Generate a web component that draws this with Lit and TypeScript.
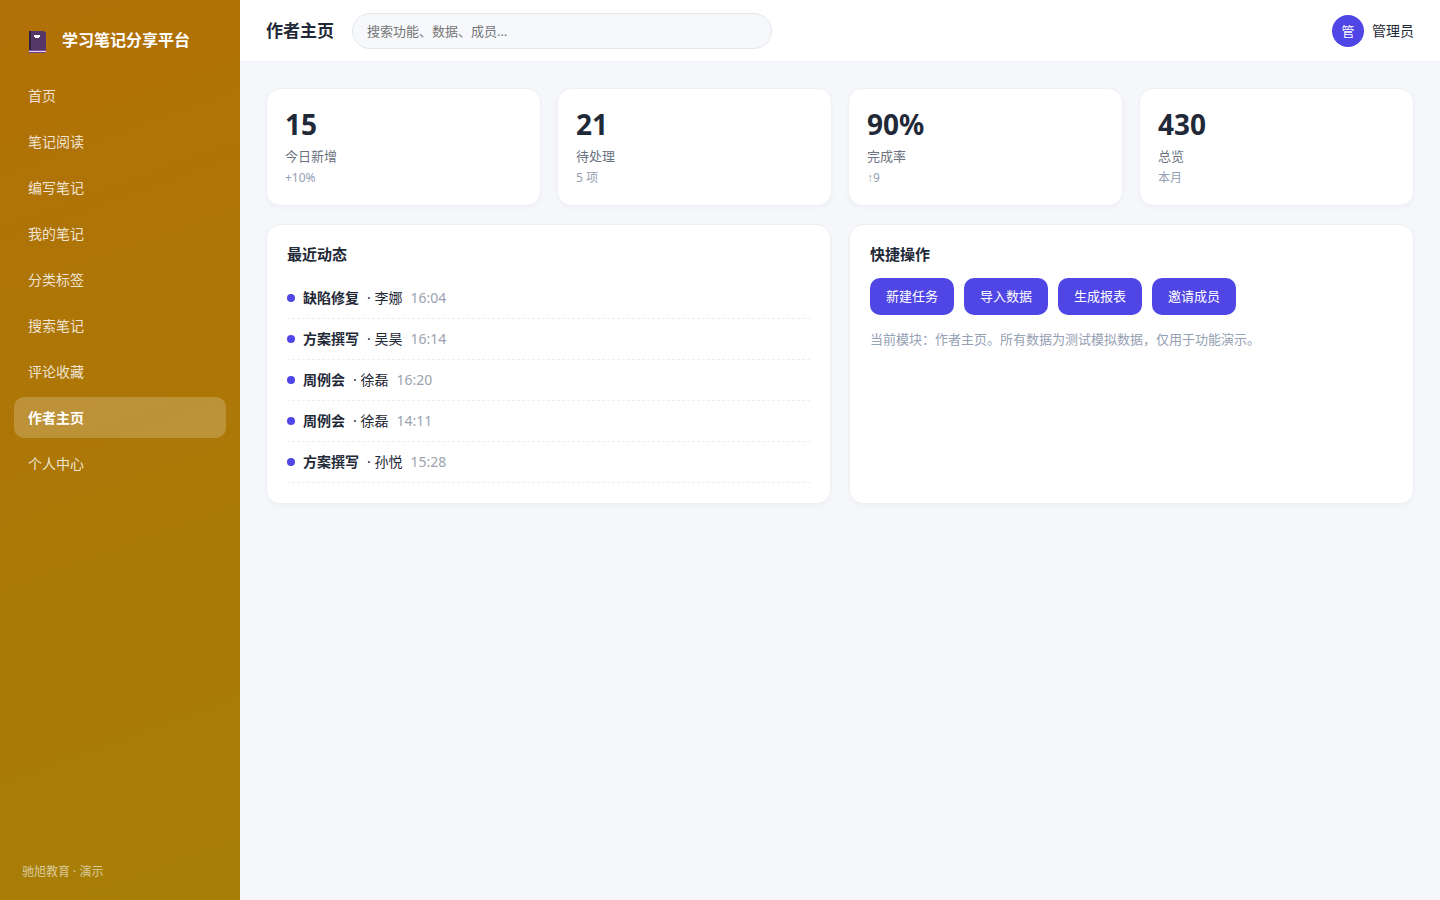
import { LitElement, html, css, svg } from "lit";
import { customElement, state } from "lit/decorators.js";
import { classMap } from "lit/directives/class-map.js";

const NAV = ["首页", "笔记阅读", "编写笔记", "我的笔记", "分类标签", "搜索笔记", "评论收藏", "作者主页", "个人中心"];

const STATS = [
  { value: "15", label: "今日新增", note: "+10%" },
  { value: "21", label: "待处理", note: "5 项" },
  { value: "90%", label: "完成率", note: "↑9" },
  { value: "430", label: "总览", note: "本月" },
];

const FEED = [
  { title: "缺陷修复", who: "李娜", time: "16:04" },
  { title: "方案撰写", who: "吴昊", time: "16:14" },
  { title: "周例会", who: "徐磊", time: "16:20" },
  { title: "周例会", who: "徐磊", time: "14:11" },
  { title: "方案撰写", who: "孙悦", time: "15:28" },
];

const ACTIONS = ["新建任务", "导入数据", "生成报表", "邀请成员"];

const book = svg`
  <path d="M1 0H15L17 2V20H1Z" fill="#543767"/>
  <path d="M0 0H2V19H0Z" fill="#321f40"/>
  <path d="M0 19H17V20H0Z" fill="#7b4fa0"/>
  <path d="M0 20H17V21H0Z" fill="#e3d3ee"/>
  <path d="M0 21H16V22H0Z" fill="#6a4090"/>
  <path d="M5 4H11V6H10V7H6V6H5Z" fill="#fff"/>
`;

@customElement("app-root")
export class AppRoot extends LitElement {
  @state() private current = "作者主页";

  static styles = css`
    :host {
      display: block;
      font-family: "Noto Sans", "Liberation Sans", "Noto Sans CJK SC", sans-serif;
      font-size: 14px;
      line-height: 20px;
      color: #1f2937;
    }
    * { box-sizing: border-box; }
    h1, h2, p, ul { margin: 0; padding: 0; }
    ul { list-style: none; }
    .layout {
      display: grid;
      grid-template-columns: 240px minmax(0, 1fr);
      min-height: 100vh;
      background: #f5f7fb;
    }
    .sidebar {
      display: flex;
      flex-direction: column;
      padding: 20px 14px 18px;
      background: linear-gradient(160deg, #b17007, #a77f06);
      color: #fff;
    }
    .brand {
      display: flex;
      align-items: center;
      gap: 14px;
      height: 40px;
      padding: 0 14px;
      margin-bottom: 15px;
      font-size: 16px;
      font-weight: 700;
    }
    .book { width: 20px; height: 26px; flex: none; }
    .nav { display: flex; flex-direction: column; gap: 5px; }
    .item {
      display: block;
      padding: 10px 14px;
      line-height: 21px;
      border-radius: 10px;
      color: rgba(255, 255, 255, 0.82);
      text-decoration: none;
    }
    .item.active {
      background: rgba(255, 255, 255, 0.2);
      color: #fff;
      font-weight: 700;
    }
    .foot {
      margin-top: auto;
      padding: 0 8px;
      font-size: 12px;
      color: rgba(255, 255, 255, 0.6);
    }
    .topbar {
      display: flex;
      align-items: center;
      gap: 18px;
      height: 62px;
      padding: 0 26px;
      background: #fff;
      border-bottom: 1px solid #eceef3;
    }
    .topbar h1 { font-size: 17px; line-height: 24px; font-weight: 700; }
    .search {
      width: 420px;
      height: 36px;
      padding: 0 14px;
      border: 1px solid #e5e7eb;
      border-radius: 18px;
      background: #f7f8fc;
      font: inherit;
      font-size: 13px;
      color: inherit;
    }
    .search::placeholder { color: #757575; }
    .user { display: flex; align-items: center; gap: 8px; margin-left: auto; }
    .avatar {
      display: grid;
      place-items: center;
      width: 32px;
      height: 32px;
      border-radius: 50%;
      background: #4f46e5;
      color: #fff;
      font-size: 13px;
    }
    .content { display: grid; gap: 18px; padding: 26px; }
    .stats { display: grid; grid-template-columns: repeat(4, 1fr); gap: 16px; }
    .panels { display: grid; grid-template-columns: repeat(2, 1fr); gap: 18px; }
    .card {
      background: #fff;
      border: 1px solid #eef0f5;
      border-radius: 14px;
      box-shadow: 0 2px 4px rgba(15, 23, 42, 0.03);
    }
    .stat { padding: 18px; }
    .value { font-size: 28px; line-height: 34px; font-weight: 700; }
    .label { margin-top: 5px; font-size: 13px; color: #6b7280; }
    .note { margin-top: 3px; font-size: 12px; line-height: 18px; color: #94a0b3; }
    .panel { padding: 20px; }
    .panel h2 { margin-bottom: 14px; font-size: 15px; line-height: 19px; font-weight: 700; }
    .row {
      display: flex;
      align-items: center;
      gap: 8px;
      padding: 10px 0;
      border-bottom: 1px dashed #eceef2;
    }
    .dot { width: 8px; height: 8px; border-radius: 50%; background: #4f46e5; }
    .time { color: #9ca3af; }
    .actions { display: flex; flex-wrap: wrap; gap: 10px; }
    .btn {
      padding: 8px 16px;
      border: 0;
      border-radius: 10px;
      background: #4f46e5;
      color: #fff;
      font: inherit;
      font-size: 13px;
      line-height: 21px;
      cursor: pointer;
    }
    .hint { margin-top: 14px; font-size: 13px; color: #94a0b3; }
  `;

  private select(event: Event, name: string) {
    event.preventDefault();
    this.current = name;
  }

  render() {
    return html`
      <div class="layout">
        <aside class="sidebar">
          <div class="brand">
            <svg class="book" viewBox="-1 -4 20 26" aria-hidden="true">${book}</svg>
            <span>学习笔记分享平台</span>
          </div>
          <nav class="nav">
            ${NAV.map(
              (name) => html`<a
                href="#"
                class=${classMap({ item: true, active: name === this.current })}
                @click=${(e: Event) => this.select(e, name)}
              >${name}</a>`
            )}
          </nav>
          <div class="foot">驰旭教育 · 演示</div>
        </aside>
        <div>
          <header class="topbar">
            <h1>${this.current}</h1>
            <input class="search" type="search" aria-label="搜索" placeholder="搜索功能、数据、成员…" />
            <div class="user"><span class="avatar">管</span><span>管理员</span></div>
          </header>
          <main class="content">
            <section class="stats">
              ${STATS.map(
                (s) => html`<div class="card stat">
                  <div class="value">${s.value}</div>
                  <div class="label">${s.label}</div>
                  <div class="note">${s.note}</div>
                </div>`
              )}
            </section>
            <div class="panels">
              <section class="card panel">
                <h2>最近动态</h2>
                <ul>
                  ${FEED.map(
                    (f) => html`<li class="row">
                      <span class="dot"></span><b>${f.title}</b><span>· ${f.who}</span><span class="time">${f.time}</span>
                    </li>`
                  )}
                </ul>
              </section>
              <section class="card panel">
                <h2>快捷操作</h2>
                <div class="actions">
                  ${ACTIONS.map((a) => html`<button class="btn" type="button">${a}</button>`)}
                </div>
                <p class="hint">当前模块：${this.current}。所有数据为测试模拟数据，仅用于功能演示。</p>
              </section>
            </div>
          </main>
        </div>
      </div>
    `;
  }
}
